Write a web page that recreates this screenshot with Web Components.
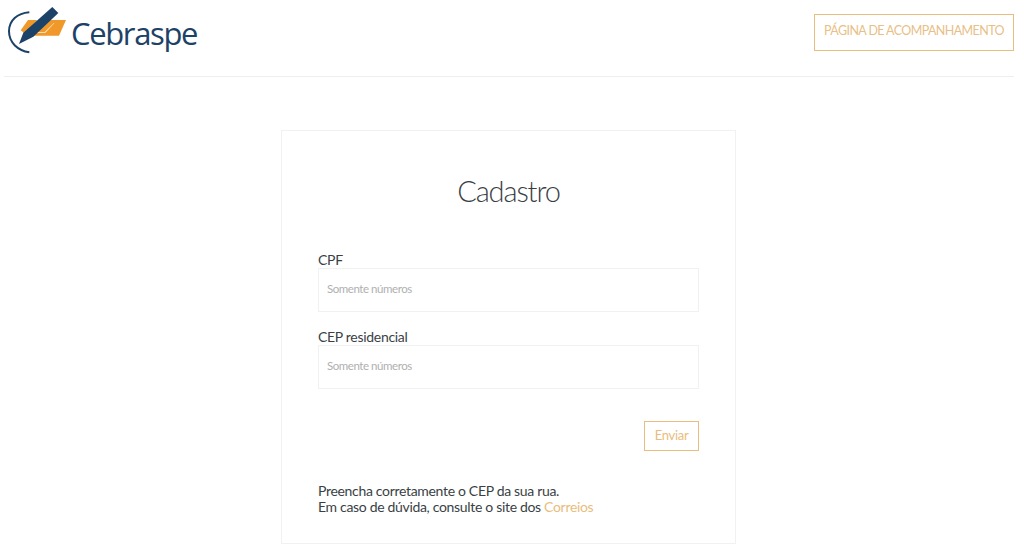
<!DOCTYPE html>
<html lang="pt-BR"><head><meta charset="utf-8"><title>Cadastro</title>
<style>
html,body{margin:0;padding:0;background:#fff;}
body{font-family:Lato,"Liberation Sans",sans-serif;color:#3a3f45;height:552px;overflow:hidden;}
</style></head><body>
<app-header></app-header>
<signup-card>
  <form-field label="CPF" placeholder="Somente números"></form-field>
  <form-field label="CEP residencial" placeholder="Somente números"></form-field>
</signup-card>
<script>
function def(name, html, setup){
  customElements.define(name, class extends HTMLElement{
    connectedCallback(){
      if(this.shadowRoot) return;
      const r=this.attachShadow({mode:'open'});
      r.innerHTML=html;
      if(setup) setup(this,r);
    }
  });
}
def('brand-logo',`<style>
:host{display:flex;align-items:center;gap:1px;height:54px}
svg{display:block;flex:none}
span{font:500 31px/1 "Open Sans",sans-serif;color:#1d4267;letter-spacing:-1.35px;margin-top:9px}
</style>
<svg width="66" height="54" viewBox="0 0 198 162">
<path d="M76 31 C40 34 15 55 15 88 C15 122 42 146 76 151" fill="none" stroke="#1d4267" stroke-width="6"/>
<path d="M72 54 L186 54 L165 101 L70 101 L50 85 Z" fill="#f0982a"/>
<path d="M80 90 L122 90 L150 62 L151 64 L124 93 L78 93 Z" fill="#fbdcae"/>
<path d="M100 54 L112 54 L90 78 L78 78 Z" fill="#fff"/>
<path d="M145 15 L163 33 L88 104 L45 126 L58 92 Z" fill="#1d4267"/>
</svg><span>Cebraspe</span>`);
def('outline-button',`<style>
:host{display:inline-flex;align-items:center;justify-content:center;box-sizing:border-box;border:1px solid #e9bd7d;color:#e9bd7d;font:13px/1 Lato,sans-serif;background:#fff;white-space:nowrap}
</style><slot></slot>`);
def('app-header',`<style>
:host{display:flex;align-items:flex-start;justify-content:space-between;box-sizing:border-box;height:77px;margin:0 10px 0 4px;padding:2px 0 0 0;border-bottom:1px solid #eeeeee}
outline-button{width:200px;height:37px;margin-top:12px;padding-bottom:2px;font-size:12.5px;font-weight:400;letter-spacing:-.6px;color:#e8bf88}
</style><brand-logo></brand-logo><outline-button>PÁGINA DE ACOMPANHAMENTO</outline-button>`);
def('form-field',`<style>
:host{display:block;margin-bottom:16px}
label{display:block;font:14px/17px Lato,sans-serif;letter-spacing:-.3px;color:#3a3f45}
.input{box-sizing:border-box;height:44px;border:1px solid #f1f1f1;padding:0 8px 2px;display:flex;align-items:center;font:11.5px/1 Lato,sans-serif;letter-spacing:-.45px;color:#b0b0b0}
</style><label></label><div class="input"></div>`,(el,r)=>{
  r.querySelector('label').textContent=el.getAttribute('label');
  r.querySelector('.input').textContent=el.getAttribute('placeholder');
});
def('signup-card',`<style>
:host{display:block;box-sizing:border-box;width:455px;height:414px;margin:53px 0 0 281px;border:1px solid #f1f1f1;padding:0 36px;background:#fff}
h1{margin:0;padding-top:42px;height:120px;box-sizing:border-box;text-align:center;font:300 29px/36px Lato,sans-serif;letter-spacing:-1.1px;color:#3a3f45}
.actions{display:flex;justify-content:flex-end;margin-top:32px}
outline-button{width:55px;height:30px;padding-bottom:2px;font-size:13px;letter-spacing:-.3px}
p{margin:32px 0 0;font:14px/16px Lato,sans-serif;letter-spacing:-.32px;color:#3a3f45}
a{color:#e9bd7d;text-decoration:none}
</style><h1>Cadastro</h1><slot></slot>
<div class="actions"><outline-button>Enviar</outline-button></div>
<p>Preencha corretamente o CEP da sua rua.<br>Em caso de dúvida, consulte o site dos <a href="#">Correios</a></p>`);
</script>
</body></html>
